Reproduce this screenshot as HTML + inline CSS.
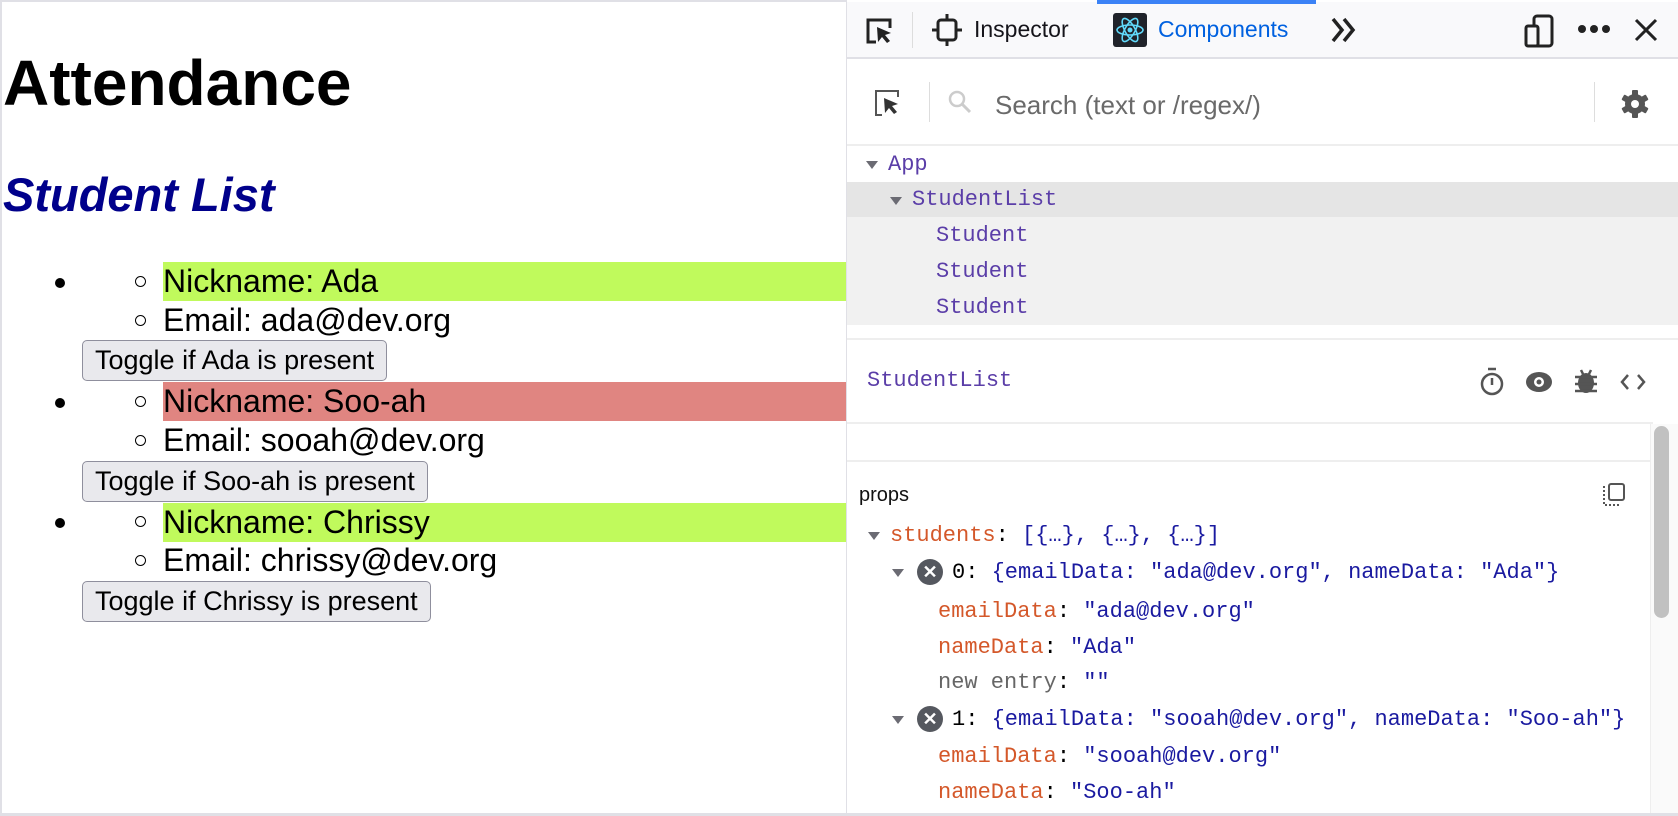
<!DOCTYPE html>
<html><head><meta charset="utf-8"><style>
*{margin:0;padding:0;box-sizing:border-box}
body{width:1678px;height:816px;overflow:hidden;background:#fff;font-family:"Liberation Sans",sans-serif;position:relative}
.a{position:absolute;white-space:nowrap}
.mono{font-family:"Liberation Mono",monospace;font-size:22px}
.row{position:absolute;left:163px;width:683px;height:39px;font-size:32px;line-height:39px;padding-left:0}
.em{position:absolute;left:163px;font-size:32px;line-height:39px;white-space:nowrap}
.circ{position:absolute;left:135px;width:11px;height:11px;border:1.5px solid #000;border-radius:50%}
.disc{position:absolute;left:55px;width:10px;height:10px;background:#000;border-radius:50%}
.btn{position:absolute;left:82px;height:41px;border:1.5px solid #8f8f9d;background:#e9e9ed;border-radius:5px;font-size:27px;line-height:38px;padding:0 12px;white-space:nowrap}
.k{color:#d4582a}.v{color:#1a1aa0}.p{color:#5b3ea8}
.tri{position:absolute;width:0;height:0;border-left:6px solid transparent;border-right:6px solid transparent;border-top:8px solid #6b6b73}
.xc{position:absolute;width:26px;height:26px;border-radius:50%;background:#55585f;color:#fff;font-size:18px;text-align:center;line-height:26px;font-weight:bold}
</style></head><body>
<div style="position:absolute;left:0;top:0;width:1678px;height:2px;background:#e0e0e6"></div>
<div style="position:absolute;left:0;top:0;width:2px;height:816px;background:#e0e0e6"></div>
<div class="a" style="left:3px;top:45px;font-size:64px;font-weight:bold;line-height:76px">Attendance</div>
<div class="a" style="left:3px;top:166px;font-size:47px;font-weight:bold;font-style:italic;color:#00008b;line-height:58px">Student List</div>

<div class="disc" style="top:278px"></div>
<div class="row" style="top:262px;background:#c0fa5c">Nickname: Ada</div>
<div class="circ" style="top:276px"></div>
<div class="circ" style="top:315px"></div>
<div class="em" style="top:301px">Email: ada@dev.org</div>
<div class="btn" style="top:340px">Toggle if Ada is present</div>

<div class="disc" style="top:398px"></div>
<div class="row" style="top:382px;background:#e08581">Nickname: Soo-ah</div>
<div class="circ" style="top:396px"></div>
<div class="circ" style="top:435px"></div>
<div class="em" style="top:421px">Email: sooah@dev.org</div>
<div class="btn" style="top:461px">Toggle if Soo-ah is present</div>

<div class="disc" style="top:518px"></div>
<div class="row" style="top:503px;background:#c0fa5c">Nickname: Chrissy</div>
<div class="circ" style="top:516px"></div>
<div class="circ" style="top:555px"></div>
<div class="em" style="top:541px">Email: chrissy@dev.org</div>
<div class="btn" style="top:581px">Toggle if Chrissy is present</div>

<!-- devtools -->
<div style="position:absolute;left:846px;top:0;width:832px;height:816px;background:#fff;border-left:1px solid #e0e0e6"></div>
<div style="position:absolute;left:847px;top:2px;width:831px;height:57px;background:#f9f9fb;border-bottom:2px solid #e0e0e6"></div>
<div style="position:absolute;left:1097px;top:0;width:219px;height:4px;background:#3b82f6"></div>
<svg class="a" style="left:864px;top:16px" width="32" height="30" viewBox="0 0 32 30"><path d="M12 26H4V4h22v8" fill="none" stroke="#222" stroke-width="3"/><path d="M13 11l14 6-6 2 5 6-3 2-5-6-4 5z" fill="#222"/></svg>
<div style="position:absolute;left:912px;top:12px;width:1px;height:36px;background:#ddd"></div>
<svg class="a" style="left:932px;top:14px" width="30" height="32" viewBox="0 0 30 32"><rect x="6" y="6" width="18" height="20" rx="3" fill="none" stroke="#222" stroke-width="3"/><path d="M15 0v6M15 26v6M0 16h6M24 16h6" stroke="#222" stroke-width="3"/></svg>
<div class="a" style="left:974px;top:16px;font-size:23px;color:#15141a">Inspector</div>
<svg class="a" style="left:1113px;top:13px" width="34" height="34" viewBox="0 0 34 34"><rect width="34" height="34" rx="3" fill="#20232a"/><g fill="none" stroke="#61dafb" stroke-width="1.6"><ellipse cx="17" cy="17" rx="13" ry="5"/><ellipse cx="17" cy="17" rx="13" ry="5" transform="rotate(60 17 17)"/><ellipse cx="17" cy="17" rx="13" ry="5" transform="rotate(120 17 17)"/></g><circle cx="17" cy="17" r="2.5" fill="#61dafb"/></svg>
<div class="a" style="left:1158px;top:16px;font-size:23px;color:#0061e0">Components</div>
<svg class="a" style="left:1330px;top:17px" width="28" height="26" viewBox="0 0 28 26"><path d="M3 2l9 11-9 11M14 2l9 11-9 11" fill="none" stroke="#222" stroke-width="3.5"/></svg>
<svg class="a" style="left:1524px;top:14px" width="32" height="34" viewBox="0 0 32 34"><rect x="10" y="2" width="18" height="30" rx="3" fill="none" stroke="#222" stroke-width="3"/><rect x="2" y="12" width="12" height="20" rx="2" fill="#f9f9fb" stroke="#222" stroke-width="3"/></svg>
<svg class="a" style="left:1577px;top:24px" width="34" height="10" viewBox="0 0 34 10"><circle cx="5" cy="5" r="4" fill="#222"/><circle cx="17" cy="5" r="4" fill="#222"/><circle cx="29" cy="5" r="4" fill="#222"/></svg>
<svg class="a" style="left:1633px;top:17px" width="26" height="26" viewBox="0 0 26 26"><path d="M3 3l20 20M23 3L3 23" stroke="#222" stroke-width="3"/></svg>

<svg class="a" style="left:873px;top:88px" width="32" height="32" viewBox="0 0 32 32"><path d="M9 27H3V3h22v6" fill="none" stroke="#555" stroke-width="2"/><path d="M11 10l14 6-6 2 5 6-3 2-5-6-4 5z" fill="#333"/></svg>
<div style="position:absolute;left:929px;top:82px;width:1px;height:40px;background:#ddd"></div>
<svg class="a" style="left:948px;top:90px" width="24" height="24" viewBox="0 0 24 24"><circle cx="9" cy="9" r="7" fill="none" stroke="#ccc" stroke-width="2.5"/><path d="M14 14l8 8" stroke="#ccc" stroke-width="3"/></svg>
<div class="a" style="left:995px;top:90px;font-size:26px;color:#6a6a6a">Search (text or /regex/)</div>
<div style="position:absolute;left:1594px;top:82px;width:1px;height:40px;background:#ddd"></div>
<svg class="a" style="left:1620px;top:89px" width="30" height="30" viewBox="0 0 30 30"><g fill="#555"><circle cx="15" cy="15" r="10"/><rect x="12" y="1" width="6" height="28" rx="1"/><rect x="12" y="1" width="6" height="28" rx="1" transform="rotate(60 15 15)"/><rect x="12" y="1" width="6" height="28" rx="1" transform="rotate(120 15 15)"/></g><circle cx="15" cy="15" r="4" fill="#fff"/></svg>
<div style="position:absolute;left:847px;top:144px;width:831px;height:2px;background:#eee"></div>

<div class="tri" style="left:866px;top:161px"></div>
<div class="a mono p" style="left:888px;top:152px;line-height:26px">App</div>
<div style="position:absolute;left:847px;top:182px;width:831px;height:35px;background:#e5e5e5"></div>
<div class="tri" style="left:890px;top:197px"></div>
<div class="a mono p" style="left:912px;top:187px;line-height:26px">StudentList</div>
<div style="position:absolute;left:847px;top:217px;width:831px;height:108px;background:#f1f1f1"></div>
<div class="a mono p" style="left:936px;top:223px;line-height:26px">Student</div>
<div class="a mono p" style="left:936px;top:259px;line-height:26px">Student</div>
<div class="a mono p" style="left:936px;top:295px;line-height:26px">Student</div>
<div style="position:absolute;left:847px;top:338px;width:831px;height:2px;background:#eee"></div>
<div class="a mono p" style="left:867px;top:368px;line-height:26px">StudentList</div>
<svg class="a" style="left:1478px;top:366px" width="170" height="32" viewBox="0 0 170 32"><circle cx="14" cy="18" r="10" fill="none" stroke="#555" stroke-width="2.5"/><path d="M14 12v7M10 3h8" stroke="#555" stroke-width="2.5"/><ellipse cx="61" cy="16" rx="13" ry="10" fill="#555"/><circle cx="61" cy="16" r="5" fill="#fff"/><circle cx="61" cy="16" r="2.5" fill="#555"/><ellipse cx="108" cy="17" rx="8" ry="10" fill="#555"/><path d="M97 11h22M97 18h22M97 25h22M103 4l2 4M113 4l-2 4" stroke="#555" stroke-width="2.5"/><path d="M150 9l-6 7 6 7M160 9l6 7-6 7" fill="none" stroke="#555" stroke-width="2.5"/></svg>
<div style="position:absolute;left:847px;top:422px;width:806px;height:2px;background:#eee"></div>
<div style="position:absolute;left:847px;top:460px;width:806px;height:2px;background:#eee"></div>
<div style="position:absolute;left:1650px;top:424px;width:28px;height:392px;background:#fafafa;border-left:1px solid #eee"></div>
<div style="position:absolute;left:1654px;top:426px;width:15px;height:192px;background:#c1c1c1;border-radius:8px"></div>

<div class="a" style="left:859px;top:484px;font-size:20px;color:#111">props</div>
<svg class="a" style="left:1601px;top:482px" width="26" height="26" viewBox="0 0 26 26"><rect x="8" y="2" width="15" height="16" rx="2" fill="none" stroke="#555" stroke-width="2"/><path d="M3 4v19h15" fill="none" stroke="#555" stroke-width="2" stroke-dasharray="2 2"/></svg>

<div class="tri" style="left:868px;top:532px"></div>
<div class="a mono" style="left:890px;top:523px;line-height:26px"><span class="k">students</span>: <span class="v">[{…}, {…}, {…}]</span></div>
<div class="tri" style="left:892px;top:569px"></div>
<div class="xc" style="left:917px;top:559px">✕</div>
<div class="a mono" style="left:952px;top:560px;line-height:26px">0: <span class="v">{emailData: "ada@dev.org", nameData: "Ada"}</span></div>
<div class="a mono" style="left:938px;top:599px;line-height:26px"><span class="k">emailData</span>: <span class="v">"ada@dev.org"</span></div>
<div class="a mono" style="left:938px;top:635px;line-height:26px"><span class="k">nameData</span>: <span class="v">"Ada"</span></div>
<div class="a mono" style="left:938px;top:670px;line-height:26px"><span style="color:#666">new entry</span>: <span class="v">""</span></div>
<div class="tri" style="left:892px;top:716px"></div>
<div class="xc" style="left:917px;top:706px">✕</div>
<div class="a mono" style="left:952px;top:707px;line-height:26px">1: <span class="v">{emailData: "sooah@dev.org", nameData: "Soo-ah"}</span></div>
<div class="a mono" style="left:938px;top:744px;line-height:26px"><span class="k">emailData</span>: <span class="v">"sooah@dev.org"</span></div>
<div class="a mono" style="left:938px;top:780px;line-height:26px"><span class="k">nameData</span>: <span class="v">"Soo-ah"</span></div>
<div style="position:absolute;left:0;top:813px;width:1678px;height:3px;background:#e0e0e6"></div>
</body></html>
